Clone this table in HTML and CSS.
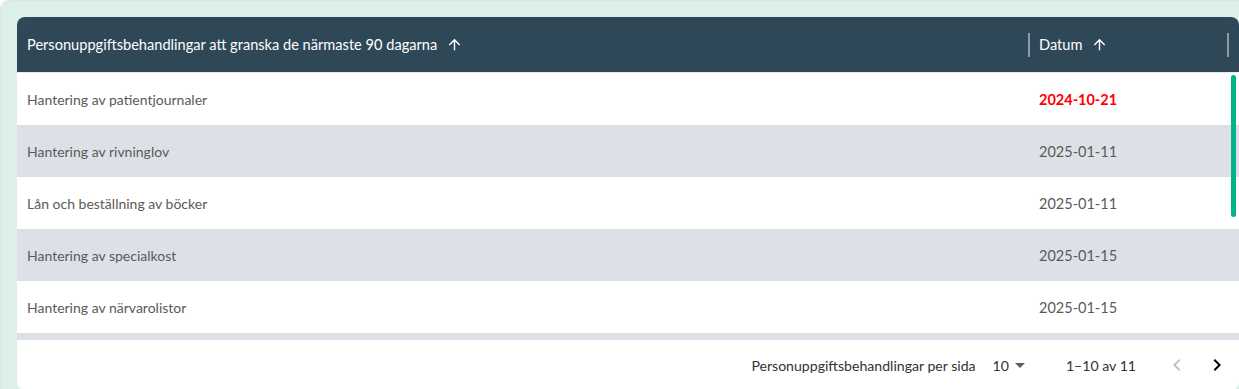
FILE: index.html
```html
<!DOCTYPE html>
<html lang="sv">
<head>
<meta charset="utf-8">
<title>Granskning</title>
<link rel="stylesheet" href="styles.css">
</head>
<body>
<div class="frame">
  <div class="card">
    <div class="grid-area">
      <div class="row head">
        <div class="cell c1">
          <span class="title">Personuppgiftsbehandlingar att granska de närmaste 90 dagarna</span>
          <svg class="sort" viewBox="0 0 24 24"><path d="M4 12l1.41 1.41L11 7.83V20h2V7.83l5.58 5.59L20 12l-8-8-8 8z"/></svg>
          <span class="sep"></span>
        </div>
        <div class="cell c2">
          <span class="title">Datum</span>
          <svg class="sort" viewBox="0 0 24 24"><path d="M4 12l1.41 1.41L11 7.83V20h2V7.83l5.58 5.59L20 12l-8-8-8 8z"/></svg>
          <span class="sep"></span>
        </div>
        <div class="cell c3"></div>
      </div>
      <div class="row">
        <div class="cell c1">Hantering av patientjournaler</div>
        <div class="cell c2 due">2024-10-21</div>
        <div class="cell c3"></div>
      </div>
      <div class="row alt">
        <div class="cell c1">Hantering av rivninglov</div>
        <div class="cell c2">2025-01-11</div>
        <div class="cell c3"></div>
      </div>
      <div class="row">
        <div class="cell c1">Lån och beställning av böcker</div>
        <div class="cell c2">2025-01-11</div>
        <div class="cell c3"></div>
      </div>
      <div class="row alt">
        <div class="cell c1">Hantering av specialkost</div>
        <div class="cell c2">2025-01-15</div>
        <div class="cell c3"></div>
      </div>
      <div class="row">
        <div class="cell c1">Hantering av närvarolistor</div>
        <div class="cell c2">2025-01-15</div>
        <div class="cell c3"></div>
      </div>
      <div class="row alt"></div>
      <div class="scrollbar"></div>
    </div>
    <div class="footer">
      <span class="label">Personuppgiftsbehandlingar per sida</span>
      <span class="select"><span class="num">10</span><svg class="caret" viewBox="0 0 24 24"><path d="M7 10l5 5 5-5z"/></svg></span>
      <span class="range">1–10 av 11</span>
      <span class="btn disabled"><svg viewBox="0 0 24 24"><path d="M15.41 7.41L14 6l-6 6 6 6 1.41-1.41L10.83 12z"/></svg></span>
      <span class="btn"><svg viewBox="0 0 24 24"><path d="M10 6L8.59 7.41 13.17 12l-4.58 4.59L10 18l6-6z"/></svg></span>
    </div>
  </div>
</div>
</body>
</html>
```

FILE: styles.css
```css
* { box-sizing: border-box; }
html, body { margin: 0; padding: 0; overflow: hidden; background: #ffffff; }
body {
  font-family: "Lato", "Open Sans", sans-serif;
  font-size: 14px;
  width: 1239px;
  height: 389px;
}
.frame {
  width: 1256px;
  height: 389px;
  background: #daf0e9;
  border: 1px solid #e3e3e3;
  border-bottom: none;
  border-radius: 9px 9px 0 0;
  padding: 16px 16px 0 16px;
}
.card {
  width: 1222px;
  height: 373px;
  background: #ffffff;
  border-radius: 8px;
  overflow: hidden;
}
.grid-area {
  position: relative;
  height: 323px;
  overflow: hidden;
}
.row {
  display: grid;
  grid-template-columns: 1013px 199px 1fr;
  height: 52px;
  align-items: center;
  color: #5a5a5a;
}
.row.alt { background: #dde1e7; }
.row.head {
  height: 56px;
  background: #2f4858;
  color: #ffffff;
  font-size: 14.6px;
  border-bottom: 1px solid #e6e9ec;
}
.cell {
  display: flex;
  align-items: center;
  height: 100%;
  padding-left: 10px;
  white-space: nowrap;
}
.c2 { padding-left: 9px; font-size: 14.5px; }
.head .c2 { font-size: 14.6px; }
.c3 { padding-left: 0; }
.sort {
  width: 17px;
  height: 17px;
  fill: #ffffff;
  margin-left: 9px;
}
.sep {
  margin-left: auto;
  width: 2px;
  height: 24px;
  background: #8e9ba4;
}
.due { color: #ff0000; font-weight: 700; }
.scrollbar {
  position: absolute;
  right: 3px;
  top: 58px;
  width: 5px;
  height: 142px;
  border-radius: 3px;
  background: #00b38a;
}
.footer {
  display: flex;
  align-items: center;
  justify-content: flex-end;
  height: 50px;
  padding-right: 2px;
  color: #333333;
  font-size: 14.1px;
}
.label { margin-right: 17px; }
.select {
  display: flex;
  align-items: center;
  margin-right: 34px;
}
.caret { width: 24px; height: 24px; fill: #5f5f5f; margin-left: -1px; }
.range { margin-right: 21px; }
.btn {
  width: 40px;
  height: 40px;
  display: flex;
  align-items: center;
  justify-content: center;
}
.btn svg { width: 24px; height: 24px; fill: #000000; }
.btn.disabled svg { fill: #c4c4c4; }
```
